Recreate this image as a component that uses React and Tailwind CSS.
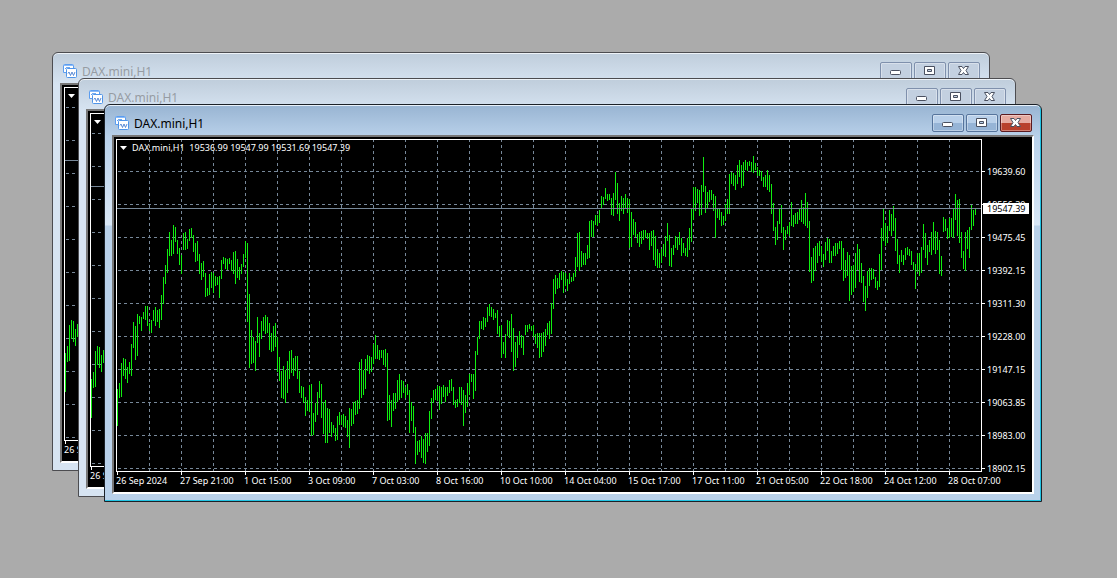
import React from "react";

const RANGES = `389-426 383-398 363-397 358-376 359-379 367-383 362-374 344-376 322-348 326-360 314-356 316-324 317-331 312-319 306-320 306-326 323-331 320-333 310-321 307-326 310-322 309-328 295-320 277-304 265-284 249-273 232-256 240-256 225-254 227-242 240-254 248-265 255-274 233-250 232-250 239-249 229-241 228-238 235-252 243-262 241-261 254-274 263-280 261-277 273-297 288-296 274-295 272-288 273-293 276-286 277-285 276-298 260-279 257-264 258-269 259-270 258-264 260-271 252-274 251-284 259-278 267-280 264-274 254-267 241-258 243-322 294-368 330-364 337-363 341-371 317-343 333-357 321-339 317-331 315-334 317-333 323-350 333-352 326-351 323-347 337-372 357-381 371-398 366-399 370-403 361-393 351-379 350-373 358-376 356-371 356-379 371-393 386-398 387-403 397-416 400-411 385-412 384-436 413-435 403-422 392-415 381-398 384-418 402-434 400-443 408-443 409-433 422-437 425-433 428-441 416-440 412-425 415-425 414-427 416-428 420-437 408-448 409-426 402-424 401-415 400-414 362-409 359-398 370-395 359-389 355-371 356-374 357-372 344-364 335-359 345-359 350-360 350-358 350-365 349-367 353-421 395-420 400-427 393-411 393-409 380-402 374-400 380-398 381-393 387-398 384-395 390-433 402-421 406-433 427-464 441-455 440-452 436-458 439-463 433-464 433-452 411-446 398-419 390-403 389-400 386-401 386-410 387-404 385-397 387-402 387-396 380-393 379-391 387-405 400-408 399-407 387-403 387-405 390-426 395-413 383-407 374-395 374-382 374-399 351-391 337-355 321-339 321-329 317-330 318-327 307-322 304-316 307-317 309-320 313-318 310-334 326-337 325-358 342-354 334-358 320-336 321-338 314-352 328-371 342-367 336-358 331-345 335-348 336-355 325-335 325-332 324-329 326-331 325-337 334-344 333-348 333-358 333-357 332-352 329-346 323-335 321-339 303-334 279-309 275-294 278-289 273-288 271-280 272-293 273-286 279-291 273-284 277-282 273-281 257-277 233-267 232-271 251-267 253-265 253-265 245-259 221-258 220-237 221-237 215-225 215-226 210-223 196-208 197-205 188-199 194-201 194-200 198-215 193-216 172-200 183-214 203-221 196-211 198-214 194-209 198-213 199-248 212-247 219-235 222-237 234-243 232-247 231-244 230-240 230-238 233-239 233-250 231-246 230-260 236-266 249-268 253-268 249-263 244-256 236-257 223-241 235-266 248-267 245-255 236-248 237-250 232-245 238-256 243-253 248-256 238-257 228-250 209-242 187-220 187-211 189-203 190-216 185-215 157-192 186-213 192-208 190-202 190-200 194-211 196-238 209-218 209-220 212-226 216-225 204-221 199-214 174-214 172-184 173-186 175-190 165-184 160-177 165-188 162-186 160-170 162-171 161-166 162-172 156-173 163-170 167-176 170-176 171-181 177-187 175-187 170-190 175-192 184-214 203-231 227-245 221-240 208-224 205-233 227-250 230-240 226-234 222-236 202-226 215-227 213-224 212-224 209-220 200-222 207-224 193-226 202-228 221-272 257-283 248-281 246-271 243-263 241-256 246-262 254-267 242-260 238-251 239-263 251-263 246-256 243-256 243-254 241-249 241-270 248-281 260-278 252-276 255-301 266-295 265-292 253-288 244-270 249-282 263-283 276-302 286-311 271-298 268-286 268-280 269-279 277-288 281-290 254-287 228-270 209-241 223-246 226-243 210-231 214-236 206-231 218-251 239-264 255-273 250-262 255-265 248-260 247-255 249-256 251-265 262-270 264-289 253-272 253-276 247-273 224-250 233-258 245-265 240-252 232-255 222-250 231-254 232-250 240-274 256-276 217-232 219-231 228-239 218-238 218-237 208-238 194-220 200-236 199-243 232-258 251-269 232-271 230-249 227-258 205-230 210-226 208-215`;

const BARS = RANGES.split(" ").map((r) => r.split("-").map((y) => Number(y) - 139));
const BASE_HEIGHT = 332;

const PRICES = ["19639.60", "19556.30", "19475.45", "19392.15", "19311.30", "19228.00", "19147.15", "19063.85", "18983.00", "18902.15"];
const TIMES = ["26 Sep 2024", "27 Sep 21:00", "1 Oct 15:00", "3 Oct 09:00", "7 Oct 03:00", "8 Oct 16:00", "10 Oct 10:00", "14 Oct 04:00", "15 Oct 17:00", "17 Oct 11:00", "21 Oct 05:00", "22 Oct 18:00", "24 Oct 12:00", "28 Oct 07:00"];
const COLUMNS = Array.from({ length: 26 }, (_, i) => 33 + i * 32);

function Plot({ height, rows }) {
  const fit = (y) => Math.round((y * height) / BASE_HEIGHT);
  const bars = BARS.map(([hi, lo], i) => `M${1 + i * 2} ${fit(hi)}h1V${fit(lo)}h-1z`).join("");
  return (
    <svg width="871" height={height + 5} shapeRendering="crispEdges" className="block shrink-0" role="img" aria-label="DAX.mini H1 bar chart">
      <g stroke="#778899" fill="none" strokeDasharray="3 3">
        {COLUMNS.map((x) => (
          <path key={x} d={`M${x}.5 0V${height}`} />
        ))}
        {rows.map((y) => (
          <path key={y} d={`M2 ${y}.5H865`} />
        ))}
      </g>
      <path d={bars} fill="#10ee10" />
      <path d={`M1 ${fit(69)}.5H866`} stroke="#778899" />
      <path d={`M0.5 0V${height + 1}M0 0.5H866M865.5 0V${height + 1}M0 ${height}.5H866`} stroke="#fff" />
      <path d={rows.map((y) => `M866 ${y}.5h3`).join("") + TIMES.map((_, i) => `M${1 + i * 64}.5 ${height}v4`).join("")} stroke="#fff" />
    </svg>
  );
}

function Chart({ covered }) {
  const first = covered ? 20 : 32;
  const rows = Array.from({ length: covered ? 11 : 10 }, (_, i) => first + i * 33);
  const times = covered ? TIMES.slice(0, 1) : TIMES;
  return (
    <div className="relative h-full overflow-hidden bg-black pt-[2px] pl-[2px] text-[9px] leading-[12px] text-white">
      <div className={`flex ${covered ? "h-[357px]" : "h-[336px]"}`}>
        <Plot height={covered ? 353 : 332} rows={rows} />
        {!covered && (
          <ul className="flex flex-col pt-[27px]">
            {PRICES.map((p) => (
              <li key={p} className="h-[33px] shrink-0">{p}</li>
            ))}
          </ul>
        )}
      </div>
      <ul className="flex">
        {times.map((t) => (
          <li key={t} className="w-16 shrink-0 whitespace-nowrap">{t}</li>
        ))}
      </ul>
      <p className="absolute top-[5px] left-[6px] flex h-3 items-center whitespace-pre">
        <svg width="7" height="4" viewBox="0 0 7 4" className="mr-[5px]" aria-hidden="true">
          <path d="M0 0h7L3.5 4z" fill="#fff" />
        </svg>
        {!covered && "DAX.mini,H1  19536.99 19547.99 19531.69 19547.39"}
      </p>
      {!covered && (
        <span className="absolute top-[66px] left-[869px] h-[11px] w-[46px] bg-white pl-1 leading-[12px] text-black">19547.39</span>
      )}
    </div>
  );
}

function ChartIcon() {
  return (
    <svg width="14" height="14" viewBox="0 0 14 14" className="shrink-0" aria-hidden="true">
      <path d="M.5 1.5q0-1 1-1h8q1 0 1 1v7h-10z" fill="#fff" stroke="#5b9df0" />
      <path d="M1 1h9v1H1z" fill="#8abaf6" />
      <path d="M2 4.500h1l1-1.500 1 1.500 1-1.500 1 1.500h2" fill="none" stroke="#5b9df0" />
      <path d="M3.5 5.500q0-1 1-1h8q1 0 1 1v7q0 1-1 1h-8q-1 0-1-1z" fill="#fff" stroke="#4f94e8" />
      <path d="M5 9.500L6 8l1.500 3.500L9 8l1.500 3.500L12 8" fill="none" stroke="#4a7fd0" strokeWidth=".9" />
    </svg>
  );
}

const GLYPHS = {
  Minimize: <rect x="5.5" y="6.5" width="10" height="4" rx="1" fill="#fff" stroke="#4a5060" />,
  Maximize: <path fillRule="evenodd" d="M5.500 2.500h10v8h-10zM8.500 5.500h4v2h-4z" fill="#fff" stroke="#4a5060" />,
  Close: <path d="M5.500 2.500h3.500l1.500 2 1.500-2h3.500l-2.500 4 2.500 4H12l-1.500-2-1.500 2H5.500l2.500-4z" fill="#fff" stroke="#4a5060" />,
};

function ControlButton({ label, active }) {
  const tone = !active
    ? "border-[#7f90ac] bg-[#c3d0e0]"
    : label === "Close"
      ? "border-[#5a1a20] bg-linear-to-b from-[#e6aaa0] from-50% to-[#b8402c] to-50%"
      : "border-[#56749c] bg-linear-to-b from-[#b9d0ea] from-50% to-[#96b4d6] to-50%";
  return (
    <button aria-label={label} className={`flex h-[18px] w-8 items-center justify-center rounded-[2px] border shadow-[inset_0_0_0_1px_rgba(255,255,255,0.35)] ${tone}`}>
      <svg width="22" height="14" viewBox="0 0 22 14" aria-hidden="true">{GLYPHS[label]}</svg>
    </button>
  );
}

function ChartWindow({ active = false, place }) {
  const frame = active
    ? "h-[398px] border-[#1c2128] bg-[linear-gradient(#98b4d2,#b9d1ea_32px,#d9e7f6_120px,#b9d1ea_121px)] shadow-[inset_-1px_-1px_0_#22c4e4,inset_0_1px_0_#e8f1fa]"
    : "h-[419px] border-[#4c4c50] bg-[linear-gradient(#bfcddb,#d7e4f2_32px)] shadow-[inset_0_1px_0_#eef3f8]";
  return (
    <section className={`absolute flex w-[938px] flex-col rounded-t-[6px] border px-[7px] pb-[7px] ${frame} ${place}`}>
      <header className="flex h-[30px] shrink-0 items-center pt-[6px] pl-[3px]">
        <ChartIcon />
        <h2 className={`ml-[5px] flex-1 pt-[2px] text-[12px] leading-4 ${active ? "text-black" : "text-[#979ca3]"}`}>DAX.mini,H1</h2>
        <div className="flex gap-[2px] pr-[2px]">
          <ControlButton label="Minimize" active={active} />
          <ControlButton label="Maximize" active={active} />
          <ControlButton label="Close" active={active} />
        </div>
      </header>
      <div className="min-h-0 flex-1 border-2 border-t-[#777] border-r-white border-b-white border-l-[#777]">
        <Chart covered={!active} />
      </div>
    </section>
  );
}

export default function App() {
  return (
    <main className="relative min-h-screen w-full overflow-hidden bg-[#ababab] font-['Noto_Sans','Open_Sans',sans-serif]">
      <ChartWindow place="top-[52px] left-[52px]" />
      <ChartWindow place="top-[78px] left-[78px]" />
      <ChartWindow active place="top-[104px] left-[104px]" />
    </main>
  );
}
